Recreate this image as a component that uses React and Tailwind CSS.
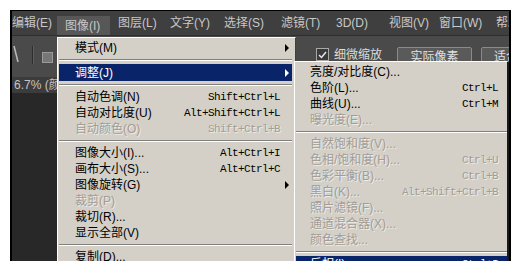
import React from "react";

const CJK = { fontFamily: '"Liberation Sans", "Noto Sans CJK SC", sans-serif' };
const MONO = { fontFamily: '"Liberation Mono", monospace' };

const menuBar = [
  { label: "编辑(E)", w: "w-[45px]", first: true },
  { label: "图像(I)", w: "w-[53px]", active: true },
  { label: "图层(L)", w: "w-[52px]" },
  { label: "文字(Y)", w: "w-[54px]" },
  { label: "选择(S)", w: "w-[57px]" },
  { label: "滤镜(T)", w: "w-[55px]" },
  { label: "3D(D)", w: "w-[53px]" },
  { label: "视图(V)", w: "w-[50px]" },
  { label: "窗口(W)", w: "w-[57px]" },
  { label: "帮助(H)", w: "w-[58px]" },
];

const imageMenu = [
  { label: "模式(M)", sub: true },
  "sep",
  { label: "调整(J)", sub: true, active: true },
  "sep",
  { label: "自动色调(N)", key: "Shift+Ctrl+L" },
  { label: "自动对比度(U)", key: "Alt+Shift+Ctrl+L" },
  { label: "自动颜色(O)", key: "Shift+Ctrl+B", disabled: true },
  "sep",
  { label: "图像大小(I)...", key: "Alt+Ctrl+I" },
  { label: "画布大小(S)...", key: "Alt+Ctrl+C" },
  { label: "图像旋转(G)", sub: true },
  { label: "裁剪(P)", disabled: true },
  { label: "裁切(R)..." },
  { label: "显示全部(V)" },
  "sep",
  { label: "复制(D)..." },
];

const adjustMenu = [
  { label: "亮度/对比度(C)..." },
  { label: "色阶(L)...", key: "Ctrl+L" },
  { label: "曲线(U)...", key: "Ctrl+M" },
  { label: "曝光度(E)...", disabled: true },
  "sep",
  { label: "自然饱和度(V)...", disabled: true },
  { label: "色相/饱和度(H)...", key: "Ctrl+U", disabled: true },
  { label: "色彩平衡(B)...", key: "Ctrl+B", disabled: true },
  { label: "黑白(K)...", key: "Alt+Shift+Ctrl+B", disabled: true },
  { label: "照片滤镜(F)...", disabled: true },
  { label: "通道混合器(X)...", disabled: true },
  { label: "颜色查找...", disabled: true },
  "sep",
  { label: "反相(I)", key: "Ctrl+I", active: true },
];

function Arrow({ white }) {
  return (
    <span
      className={
        "ml-auto mr-[-9px] h-0 w-0 border-y-[4px] border-l-[4px] border-y-transparent " +
        (white ? "border-l-white" : "border-l-black")
      }
    />
  );
}

function Sep() {
  return (
    <div className="flex h-[8px] items-center">
      <div className="w-full border-t border-b border-t-[#808080] border-b-white" />
    </div>
  );
}

function Row({ item, pl, pr }) {
  const color = item.active
    ? "bg-[#0a246a] text-white"
    : item.disabled
    ? "text-[#a09d97] [text-shadow:1px_1px_0_rgba(255,255,255,0.6)]"
    : "text-black";
  return (
    <div className={"flex h-4 items-center whitespace-nowrap text-[12px] leading-4 " + pl + " " + pr + " " + color}>
      <span style={CJK}>{item.label}</span>
      {item.key && (
        <span className="ml-auto text-[11px] tracking-[-0.6px]" style={MONO}>
          {item.key}
        </span>
      )}
      {item.sub && <Arrow white={item.active} />}
    </div>
  );
}

export default function App() {
  return (
    <div className="relative h-[261px] w-[522px] overflow-hidden bg-white pl-[10px] pr-[11px] pt-[10px]">
      <div className="flex h-full flex-col overflow-hidden border-l-2 border-r-2 border-t border-black bg-[#282828]">
        {/* menu bar */}
        <div className="flex h-[24px] shrink-0 items-center overflow-hidden bg-[#3f3f3f] text-[12px] text-[#c8c8c8]" style={CJK}>
          {menuBar.map((m) => (
            <div
              key={m.label}
              className={
                "flex h-[19px] shrink-0 items-center whitespace-nowrap " +
                m.w +
                (m.first ? " pl-0" : " pl-[8px]") +
                (m.active ? " mt-[5px] self-start bg-[#575757]" : "")
              }
            >
              {m.label}
            </div>
          ))}
        </div>

        {/* options bar */}
        <div className="flex h-[42px] shrink-0 items-start overflow-hidden border-t border-[#2e2e2e] bg-[#4a4a4a] pt-[11px]">
          <svg className="ml-[1px] mt-[-2px] shrink-0" width="6" height="18" viewBox="0 0 6 18">
            <path d="M1 1 L5 17" stroke="#b8b8b8" strokeWidth="1.6" />
          </svg>
          <div className="ml-[13px] mt-[-1px] flex h-[18px] w-[2px] shrink-0">
            <div className="w-px bg-[#2c2c2c]" />
            <div className="w-px bg-[#5e5e5e]" />
          </div>
          <div className="ml-[8px] mt-[5px] h-[11px] w-[11px] shrink-0 border border-[#9a9a9a] bg-[#777]" />
          <div className="ml-[263px] mt-[1px] flex h-[13px] w-[13px] shrink-0 items-center justify-center border border-[#a8a8a8] bg-[#3a3a3a]">
            <svg width="9" height="8" viewBox="0 0 9 8">
              <path d="M1 4 L3.5 6.5 L8 1" stroke="#e6e6e6" strokeWidth="1.5" fill="none" />
            </svg>
          </div>
          <span className="ml-[5px] mt-[-1px] shrink-0 text-[12px] text-[#dcdcdc]" style={CJK}>
            细微缩放
          </span>
          <div className="ml-[15px] flex h-[20px] w-[75px] shrink-0 items-center justify-center rounded-[2px] border border-[#8a8a8a] bg-[#5a5a5a] text-[12px] text-[#e0e0e0]" style={CJK}>
            实际像素
          </div>
          <div className="ml-[9px] flex h-[20px] w-[75px] shrink-0 items-center justify-start whitespace-nowrap rounded-[2px] border border-[#8a8a8a] bg-[#5a5a5a] pl-[12px] text-[12px] text-[#e0e0e0]" style={CJK}>
            适合屏幕
          </div>
        </div>

        {/* document tab */}
        <div className="flex h-[16px] shrink-0 items-center whitespace-nowrap bg-[#3c3c3c] pl-[2px] text-[12px] text-[#c4c4c4]" style={CJK}>
          6.7% (颜色, RGB/8)
        </div>

        {/* canvas */}
        <div className="flex-1 bg-[#282828]" />
      </div>

      {/* 图像 menu */}
      <div className="absolute left-[57px] top-[37px] h-[240px] w-[239px] border-l border-t border-r border-l-white border-t-white border-r-[#404040] bg-[#d4d0c8] pl-[1px] pr-[3px] pt-[2px]">
        {imageMenu.map((it, i) =>
          it === "sep" ? (
            <Sep key={i} />
          ) : (
            <div key={i} className={it.active ? "h-[17px] [&>div]:h-[17px]" : ""}>
              <Row item={it} pl="pl-[16px]" pr="pr-[12px]" />
            </div>
          )
        )}
      </div>

      {/* 调整 submenu */}
      <div className="absolute left-[294px] top-[61px] h-[220px] w-[215px] border-l border-t border-r-2 border-l-white border-t-white border-r-[#1a1a1a] bg-[#d4d0c8] pl-[1px] pt-[2px]">
        {adjustMenu.map((it, i) =>
          it === "sep" ? <Sep key={i} /> : <Row key={i} item={it} pl="pl-[14px]" pr="pr-[9px]" />
        )}
      </div>
    </div>
  );
}
